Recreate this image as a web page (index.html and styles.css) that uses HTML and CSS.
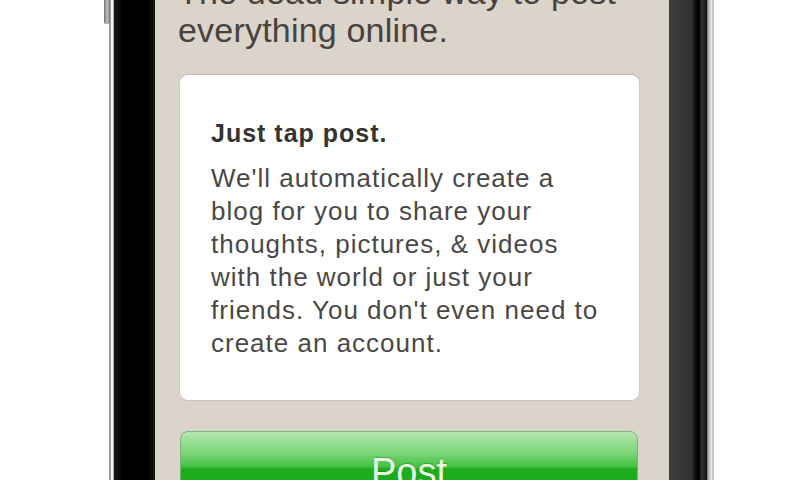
FILE: index.html
```html
<!DOCTYPE html>
<html lang="en">
    <head>
        <meta charset="UTF-8" />
        <meta name="viewport" content="width=device-width, initial-scale=1.0" />
        <title>Post</title>
        <link rel="stylesheet" href="styles.css">
    </head>
    <body>
        <div class="phone">
            <div class="side-switch"></div>
            <div class="rim-left"></div>
            <div class="bezel-left"></div>
            <div class="screen">
                <h1 class="headline">The dead simple way to post<br>everything online.</h1>
                <div class="card">
                    <h3>Just tap post.</h3>
                    <p>We'll automatically create a blog for you to share your thoughts, pictures, &amp; videos with the world or just your friends. You don't even need to create an account.</p>
                </div>
                <button class="post-button" type="button">Post</button>
            </div>
            <div class="bezel-right"></div>
            <div class="rim-right"></div>
        </div>
    </body>
</html>
```

FILE: styles.css
```css
body {
    margin: 0;
    background-color: #fff;
    font-family: "Liberation Sans", Arial, sans-serif;
    overflow: hidden;
}
.phone {
    position: relative;
    display: flex;
    height: 480px;
    margin-left: 109px;
    width: fit-content;
    border-left: 2px solid #9b9b9b;
    border-right: 2px solid #c9c9c9;
}
.side-switch {
    position: absolute;
    left: -7px;
    top: 0;
    width: 6px;
    height: 24px;
    background: linear-gradient(to right, #6a6a6a, #c4c4c4 50%, #7a7a7a);
    border-radius: 0 0 2px 2px;
}
.rim-left {
    width: 2px;
    background-color: #f4f4f4;
    border-right: 1px solid #a8a8a8;
}
.bezel-left {
    width: 41px;
    background: linear-gradient(to right, #161616, #000 20%, #000 85%, #151515);
}
.screen {
    width: 514px;
    background-color: #dbd4cb;
    overflow: hidden;
    padding: 0 30px 0 23px;
    box-sizing: border-box;
}
.headline {
    margin: -27px 0 0;
    font-size: 34px;
    line-height: 38px;
    font-weight: normal;
    letter-spacing: 0.2px;
    color: #48433f;
}
.card {
    margin: 26px 0 0 2px;
    height: 325px;
    box-sizing: border-box;
    padding: 42px 30px 0 31px;
    background-color: #fff;
    border-radius: 8px;
    box-shadow: 0 -1px 2px rgba(0, 0, 0, 0.14), 0 1px 1px rgba(0, 0, 0, 0.08);
}
.card h3 {
    margin: 0 0 12px;
    font-size: 25px;
    line-height: 33px;
    letter-spacing: 1px;
    color: #363331;
}
.card p {
    margin: 0;
    font-size: 26px;
    line-height: 33px;
    letter-spacing: 1px;
    color: #4a4846;
}
.post-button {
    display: block;
    width: 458px;
    height: 70px;
    margin: 31px 0 0 2px;
    padding: 10px 0 0;
    border: 1px solid #7fb37b;
    border-radius: 8px;
    background: linear-gradient(to bottom, #b2e6ad 0%, #7fd67a 30%, #41bf3d 52%, #1fad1e 53%, #1aa91a 100%);
    font-family: "Liberation Sans", Arial, sans-serif;
    font-size: 38px;
    line-height: 60px;
    text-align: center;
    color: #e9f6e6;
    text-shadow: 0 -1px 0 rgba(0, 80, 0, 0.3);
    box-sizing: border-box;
    cursor: pointer;
}
.bezel-right {
    width: 38px;
    background: linear-gradient(to right, #3e3e3e 0%, #303030 60%, #000 74%, #000 80%, #2c2c2c 84%, #262626 95%, #000 100%);
}
.rim-right {
    width: 5px;
    background: linear-gradient(to right, #7d7d7d, #d2d2d2 60%, #eeeeee);
}
```
